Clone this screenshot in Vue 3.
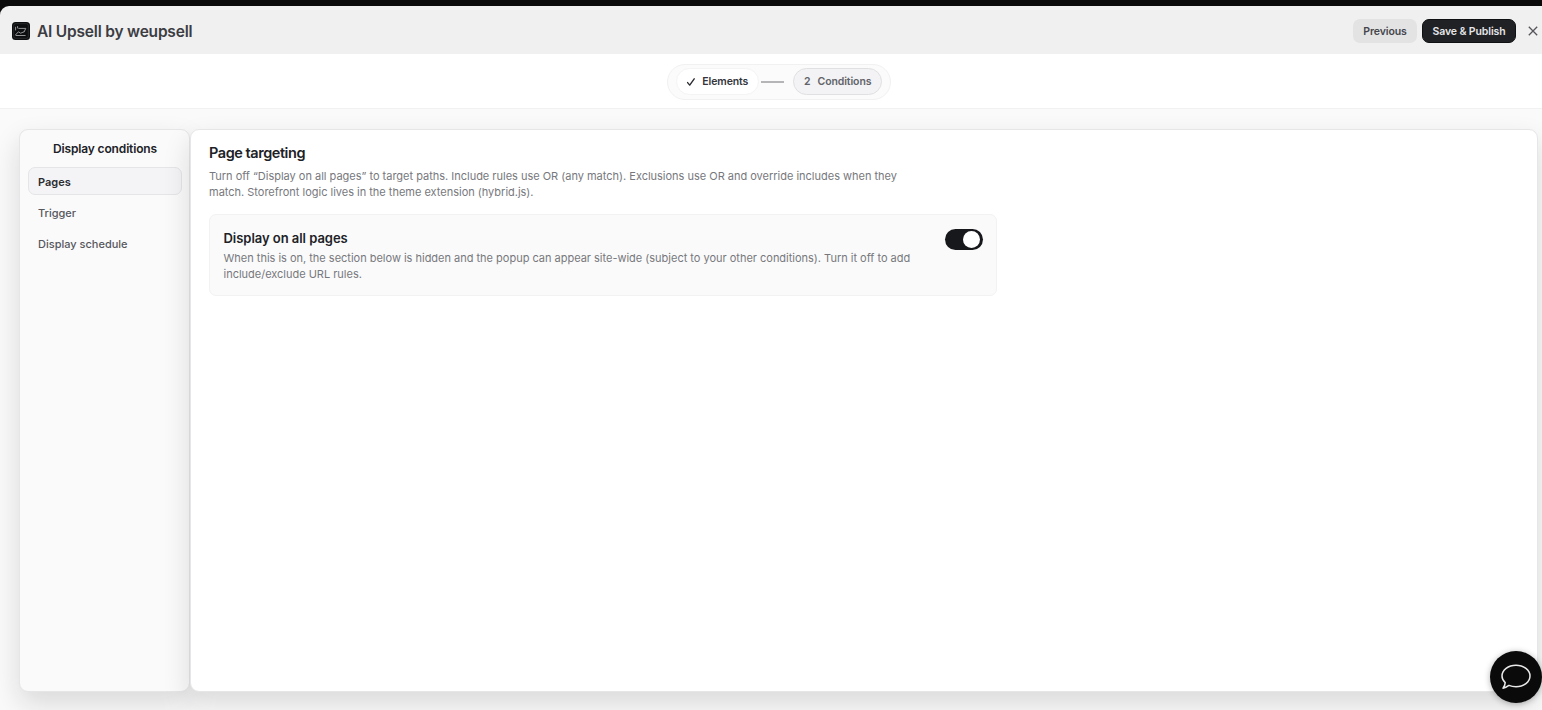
<template>
  <div class="shell">
    <header class="topbar">
      <div class="brand">
        <svg class="brand-icon" viewBox="0 0 18 18" aria-hidden="true">
          <rect width="18" height="18" rx="3.5" fill="#0c0d0e" />
          <rect x="1.7" y="1.7" width="14.6" height="14.6" rx="2" fill="none" stroke="#3b3d40" stroke-width="0.6" />
          <path d="M3.6 8V5.2M5.6 6V4.5M6.8 6.4h7l-1.7 3.4M3.6 12.8l2.8-3 2.2 1.4 3.5-1.4M4 13.5h9.2" fill="none" stroke="#a0a2a4" stroke-width="0.9" stroke-linecap="round" stroke-linejoin="round" />
        </svg>
        <span class="brand-name">AI Upsell by weupsell</span>
      </div>
      <div class="actions">
        <button class="btn" type="button">Previous</button>
        <button class="btn primary" type="button">Save &amp; Publish</button>
        <button class="close" type="button" aria-label="Close">
          <svg viewBox="0 0 10 10"><path d="M0.8 0.8l8.4 8.4M9.2 0.8L0.8 9.2" /></svg>
        </button>
      </div>
    </header>

    <nav class="steps-bar">
      <div class="steps">
        <div class="step done">
          <svg class="check" viewBox="0 0 10 10"><path d="M1.6 5.6l2.1 2.5L8.2 1.8" /></svg>
          <span>Elements</span>
        </div>
        <span class="connector"></span>
        <div class="step current">
          <span class="step-number">2</span>
          <span>Conditions</span>
        </div>
      </div>
    </nav>

    <div class="workspace">
      <aside class="sidebar">
        <h2 class="sidebar-title">Display conditions</h2>
        <button
          v-for="item in items"
          :key="item.id"
          type="button"
          :class="['nav-item', { active: item.id === activeItem }]"
          @click="activeItem = item.id"
        >
          {{ item.label }}
        </button>
      </aside>

      <main class="panel">
        <h1 class="panel-title">Page targeting</h1>
        <p class="panel-text">
          Turn off “Display on all pages” to target paths. Include rules use OR (any match). Exclusions use OR and override includes when they<br />
          match. Storefront logic lives in the theme extension (hybrid.js).
        </p>

        <section class="card">
          <div class="card-body">
            <h3 class="card-title">Display on all pages</h3>
            <p class="card-text">
              When this is on, the section below is hidden and the popup can appear site-wide (subject to your other conditions). Turn it off to add<br />
              include/exclude URL rules.
            </p>
          </div>
          <button
            type="button"
            role="switch"
            aria-label="Display on all pages"
            :aria-checked="allPages"
            :class="['toggle', { on: allPages }]"
            @click="allPages = !allPages"
          >
            <span class="knob"></span>
          </button>
        </section>
      </main>
    </div>

    <button class="chat" type="button" aria-label="Open chat">
      <svg viewBox="0 0 32 28">
        <path d="M5.2 19.6C3.2 17.8 2 15.5 2 13 2 7 8.2 2.2 16 2.2S30 7 30 13s-6.2 10.8-14 10.8c-2.6 0-5-.5-7.1-1.4-1.8 1.3-3.7 2.4-5.9 2.8 1.3-1.6 2.1-3.6 2.2-5.6z" />
      </svg>
    </button>
  </div>
</template>

<script setup>
import { ref } from 'vue';

const items = [
  { id: 'pages', label: 'Pages' },
  { id: 'trigger', label: 'Trigger' },
  { id: 'schedule', label: 'Display schedule' }
];

const activeItem = ref('pages');
const allPages = ref(true);
</script>

<style>
body {
  background: #0a0a0b;
  overflow: hidden;
}
</style>

<style scoped>
.shell {
  box-sizing: border-box;
  height: 100vh;
  padding-top: 6px;
  display: flex;
  flex-direction: column;
  font-family: Inter, 'Liberation Sans', sans-serif;
  color: #202126;
}

.shell *,
.shell *::before {
  box-sizing: border-box;
}

button {
  font: inherit;
  color: inherit;
  border: 0;
  background: none;
  padding: 0;
  cursor: pointer;
}

h1,
h2,
h3,
p {
  margin: 0;
}

.topbar {
  height: 48px;
  flex: none;
  display: flex;
  align-items: center;
  justify-content: space-between;
  padding: 2px 4px 0 12px;
  background: #f0f0f0;
  border-top-left-radius: 9px;
}

.brand {
  display: flex;
  align-items: center;
  gap: 7px;
}

.brand-icon {
  width: 18px;
  height: 18px;
}

.brand-name {
  font-size: 15.5px;
  font-weight: 600;
  letter-spacing: -0.2px;
  color: #3c3d43;
  white-space: nowrap;
}

.actions {
  display: flex;
  align-items: center;
}

.btn {
  width: 64px;
  height: 24px;
  border-radius: 7px;
  background: #e3e3e4;
  color: #45464b;
  font-size: 10.5px;
  font-weight: 600;
  letter-spacing: -0.1px;
  white-space: nowrap;
}

.btn.primary {
  width: 94px;
  margin-left: 5px;
  background: #202124;
  border: 1px solid #0f1012;
  color: #e6e6e8;
}

.close {
  display: flex;
  margin-left: 12px;
}

.close svg {
  width: 10px;
  height: 10px;
  fill: none;
  stroke: #55565b;
  stroke-width: 1.3;
}

.steps-bar {
  height: 55px;
  flex: none;
  display: flex;
  justify-content: center;
  align-items: center;
  padding: 1px 0 0 16px;
  background: #fff;
  border-bottom: 1px solid #f1f1f2;
}

.steps {
  width: 224px;
  height: 36px;
  display: flex;
  align-items: center;
  padding: 0 8px;
  border: 1px solid #f1f1f2;
  border-radius: 18px;
  background: #fbfbfb;
}

.step {
  height: 27px;
  display: flex;
  align-items: center;
  justify-content: center;
  border-radius: 14px;
  font-size: 10.5px;
  font-weight: 600;
  letter-spacing: -0.1px;
  white-space: nowrap;
}

.step.done {
  width: 83px;
  gap: 6px;
  background: #fff;
  border: 1px solid #f4f4f5;
  color: #34353b;
}

.step.current {
  width: 89px;
  gap: 7px;
  background: #f3f3f5;
  border: 1px solid #e0e0e2;
  color: #626369;
}

.check {
  width: 10px;
  height: 10px;
  fill: none;
  stroke: #2b2c31;
  stroke-width: 1.4;
  stroke-linecap: round;
  stroke-linejoin: round;
}

.connector {
  width: 24px;
  height: 2px;
  margin: 0 9px 0 2px;
  background: #b5b5b8;
}

.workspace {
  flex: 1;
  min-height: 0;
  display: flex;
  padding: 20px 4px 18px 19px;
  background: #fafafa;
}

.sidebar {
  width: 171px;
  flex: none;
  display: flex;
  flex-direction: column;
  padding: 11px 7px 11px 8px;
  border: 1px solid #e6e6e8;
  border-radius: 9px;
  background: #fafafa;
  box-shadow: 0 12px 28px rgba(20, 20, 30, 0.14);
}

.sidebar-title {
  margin-bottom: 10px;
  font-size: 12px;
  font-weight: 600;
  line-height: 16px;
  letter-spacing: -0.15px;
  text-align: center;
  white-space: nowrap;
}

.nav-item {
  height: 28px;
  margin-bottom: 3px;
  padding: 1px 9px 0;
  border: 1px solid transparent;
  border-radius: 7px;
  font-size: 11px;
  font-weight: 500;
  text-align: left;
  color: #56575d;
}

.nav-item.active {
  background: #f4f4f6;
  border-color: #e5e5e7;
  font-weight: 600;
  color: #2b2c31;
}

.panel {
  flex: 1;
  padding: 14px 18px;
  border: 1px solid #e6e6e8;
  border-radius: 9px;
  background: #fff;
  box-shadow: 0 12px 28px rgba(20, 20, 30, 0.14);
}

.panel-title {
  font-size: 14.5px;
  font-weight: 600;
  line-height: 18px;
  letter-spacing: -0.45px;
}

.panel-text,
.card-text {
  font-size: 11px;
  line-height: 16px;
  letter-spacing: -0.01px;
  color: #77787d;
  white-space: nowrap;
}

.panel-text {
  margin-top: 6px;
}

.card {
  width: 788px;
  height: 82px;
  margin-top: 14px;
  display: flex;
  justify-content: space-between;
  padding: 14px 13px 14px 13.5px;
  border: 1px solid #f2f2f3;
  border-radius: 7px;
  background: #fafafa;
}

.card-title {
  font-size: 13px;
  font-weight: 600;
  line-height: 18px;
  letter-spacing: -0.04px;
}

.card-text {
  margin-top: 3px;
}

.toggle {
  width: 38px;
  height: 21px;
  flex: none;
  display: flex;
  align-items: center;
  padding: 2px 3px;
  border-radius: 11px;
  background: #b9babd;
}

.toggle.on {
  justify-content: flex-end;
  background: #17181b;
}

.knob {
  width: 17px;
  height: 17px;
  border-radius: 50%;
  background: #fff;
}

/* floating launcher sits over the panel corner */
.chat {
  position: absolute;
  right: 0;
  bottom: 7px;
  width: 52px;
  height: 52px;
  display: flex;
  align-items: center;
  justify-content: center;
  border-radius: 50%;
  background: #0a0a0b;
  box-shadow: 0 1px 6px rgba(0, 0, 0, 0.3);
}

.chat svg {
  width: 32px;
  height: 28px;
  fill: none;
  stroke: #e9e9e9;
  stroke-width: 1.5;
  stroke-linejoin: round;
}
</style>
